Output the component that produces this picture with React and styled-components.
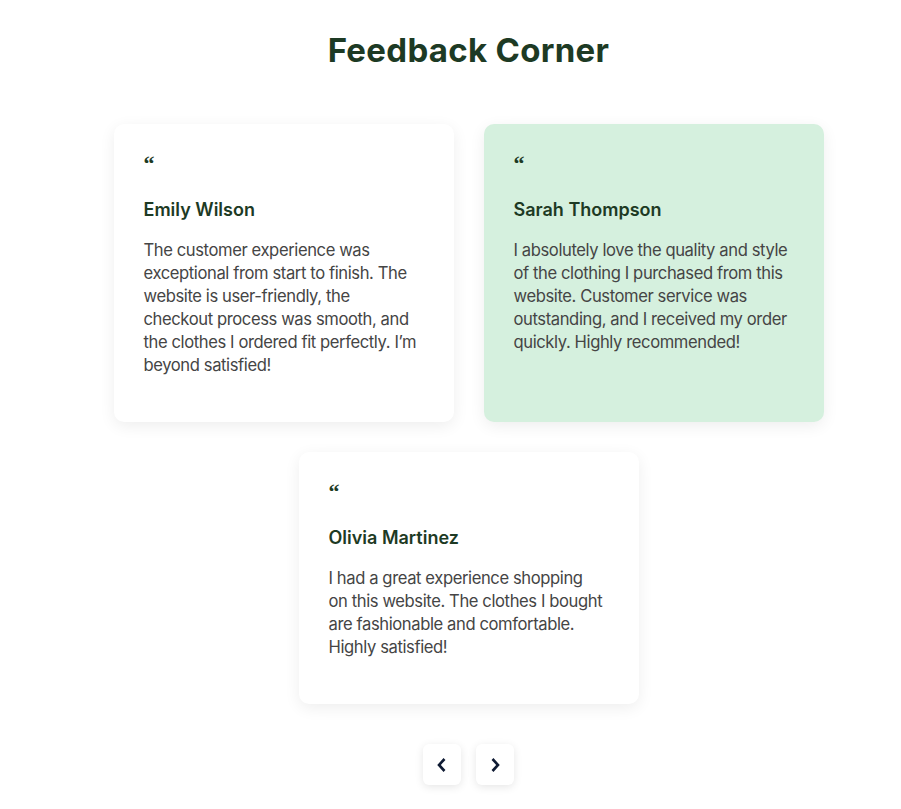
import styled, { createGlobalStyle } from "styled-components";

const Global = createGlobalStyle`
    body{
        margin:0;
        background:#fff;
        font-family: Inter, "Noto Sans", sans-serif;
    }
`

const Section = styled.section`
    padding: 30px 2px 24px 38px;
    display:flex;
    flex-direction:column;
    align-items:center;
`

const Title = styled.h2`
    margin:0 0 54px;
    font-size: 33px;
    line-height: 40px;
    font-weight: 700;
    color: #1d3a24;
    letter-spacing: 0.3px;
`

const Grid = styled.div`
    display:flex;
    flex-wrap:wrap;
    justify-content:center;
    gap:30px;
    width: 740px;
`

const Card = styled.div`
    width:340px;
    box-sizing:border-box;
    padding:30px 34.4px 45px 30px;
    border-radius:10px;
    background:${props => props.active ? '#d5f0de' : '#fff'};
    box-shadow:0 4px 16px rgba(0, 0, 0, .07);
`

const Quote = styled.div`
    font-size: 22px;
    line-height: 20px;
    height: 30px;
    color: #1d3a24;
    font-family: "Liberation Serif", serif;
    font-weight: 700;
`

const Name = styled.h3`
    margin: 14px 0 17px;
    font-size: 18px;
    line-height: 24px;
    font-weight: 600;
    color: #1d3a24;
`

const Text = styled.p`
    margin:0;
    font-size: 16.6px;
    line-height: 23px;
    letter-spacing: -0.4px;
    color: #454545;
`

const Nav = styled.div`
    display:flex;
    gap:15px;
    margin-top:40px;
`

const NavBtn = styled.button`
    width:38px;
    height:41px;
    border:none;
    border-radius:6px;
    background:#fff;
    box-shadow:0 2px 8px rgba(0, 0, 0, .1);
    display:flex;
    align-items:center;
    justify-content:center;
    cursor:pointer;
    padding:0;
`

const reviews = [
    { name: "Emily Wilson", text: "The customer experience was exceptional from start to finish. The website is user-friendly, the checkout process was smooth, and the clothes I ordered fit perfectly. I’m beyond satisfied!" },
    { name: "Sarah Thompson", active: true, text: "I absolutely love the quality and style of the clothing I purchased from this website. Customer service was outstanding, and I received my order quickly. Highly recommended!" },
    { name: "Olivia Martinez", text: "I had a great experience shopping on this website. The clothes I bought are fashionable and comfortable. Highly satisfied!" },
]

const Chevron = ({ dir }) => (
    <svg width="12" height="16" viewBox="0 0 12 16">
        <path d={dir === 'left' ? "M8.5 2 L3 8 L8.5 14" : "M3.5 2 L9 8 L3.5 14"} fill="none" stroke="#0f1b33" strokeWidth="2.6" strokeLinejoin="miter" />
    </svg>
)

const App = () => {
    return <>
        <Global />
        <Section>
            <Title>Feedback Corner</Title>
            <Grid>
                {reviews.map(r => (
                    <Card key={r.name} active={r.active}>
                        <Quote>“</Quote>
                        <Name>{r.name}</Name>
                        <Text>{r.text}</Text>
                    </Card>
                ))}
            </Grid>
            <Nav>
                <NavBtn><Chevron dir="left" /></NavBtn>
                <NavBtn><Chevron dir="right" /></NavBtn>
            </Nav>
        </Section>
    </>
}

export default App
